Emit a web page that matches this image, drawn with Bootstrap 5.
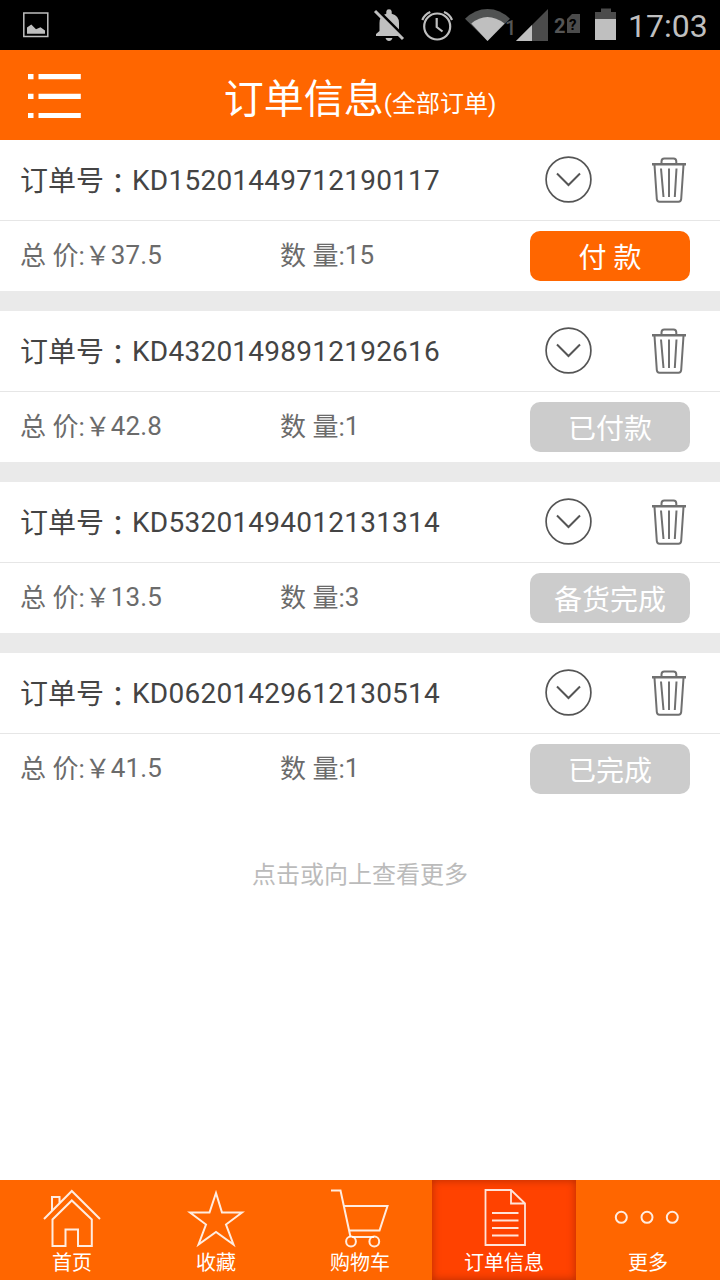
<!DOCTYPE html>
<html lang="zh-CN">
<head>
<meta charset="utf-8">
<meta name="viewport" content="width=device-width, initial-scale=1">
<title>订单信息</title>
<link href="https://cdn.jsdelivr.net/npm/bootstrap@5.3.0/dist/css/bootstrap.min.css" rel="stylesheet">
<style>
  body { font-family: Roboto, "Noto Sans CJK SC", sans-serif; color: #444; height: 1280px; overflow: hidden; }
  svg { display: block; flex: none; }
  .status { height: 50px; background: #000; color: #bfbfbf; }
  .clock { font-size: 32px; line-height: 50px; width: 92px; padding-top: 1px; white-space: nowrap; }
  .topbar { height: 90px; background: #f60; color: #fff; display: grid; grid-template-columns: 110px 1fr 110px; }
  .topbar h1 { font-size: 40px; line-height: 90px; font-weight: 400; padding-top: 5px; }
  .topbar h1 span { font-size: 24px; vertical-align: 1px; }
  .orders .list-group-item { border: 0; border-bottom: 20px solid #eaeaea; padding: 0; }
  .orders .list-group-item:last-child { border-bottom: 0; }
  .order-head { height: 81px; border-bottom: 1px solid #e6e6e6; font-size: 28px; color: #444; padding: 0 31px 0 20px; }
  .order-head > span { padding-top: 2px; }
  .order-body { height: 70px; font-size: 26px; color: #6b6b6b; padding: 0 30px 0 20px; }
  .toggle-icon { margin-right: 55px; }
  .colon { font-family: "Noto Sans CJK TC", sans-serif; vertical-align: -3px; line-height: 1; }
  .num { letter-spacing: .24px; vertical-align: 1px; }
  .order-body .num { letter-spacing: .1px; }
  .price { width: 260px; }
  .pay { width: 160px; height: 50px; border-radius: 10px; border: 0; font-size: 28px; line-height: 50px; padding: 3px 0 0; color: #fff; background: #ccc; }
  .pay.due { background: #f60; }
  .more-tip { color: #bbb; font-size: 24px; line-height: 36px; margin-top: 53px; }
  .tabs { height: 100px; background: #f60; }
  .tabs a { color: #fff; font-size: 20px; line-height: 26px; text-decoration: none; }
  .tabs a.current { background: #ff4200; box-shadow: inset 0 0 8px rgba(130,30,0,.6); }
</style>
</head>
<body class="d-flex flex-column bg-white">
<svg width="0" height="0" class="position-absolute" aria-hidden="true">
  <symbol id="down" viewBox="0 0 50 50">
    <g fill="none" stroke="#555" stroke-width="1.7"><circle cx="24.500" cy="24.500" r="22.400"/><path d="M13 18.500 24.500 30 36 18.500" stroke-width="2"/></g>
  </symbol>
  <symbol id="trash" viewBox="0 0 40 50">
    <g fill="none" stroke="#707070" stroke-width="2">
      <path d="M12.500 9V6.500Q12.500 3.500 15.300 3.500H24.500Q27.300 3.500 27.300 6.500V9"/>
      <path d="M3 9.300H37" stroke-width="2.400"/>
      <path d="M5.500 10 7.800 44Q8 46.700 10.500 46.700H29.500Q32 46.700 32.200 44L34.500 10"/>
      <path d="M12 13.500 14.500 42M20 13.500V42M27.500 13.500 25.800 42"/>
    </g>
  </symbol>
</svg>

<header>
  <div class="status d-flex justify-content-between">
    <svg width="60" height="50" viewBox="0 0 60 50"><rect x="23.800" y="13" width="24" height="23.500" fill="none" stroke="#bfbfbf" stroke-width="1.500"/><path d="M27 33.700V27.500L31.300 24.500 36 29.300 40.500 27.300 45 30.500V33.700Z" fill="#bfbfbf"/></svg>
    <div class="d-flex">
      <svg width="45" height="50" viewBox="370 0 45 50"><path d="M376 36V34L379.500 31V23Q379.500 15.500 386.300 13.700V11.500Q386.500 9.300 389 9.300T391.700 11.500V13.700Q399 15.500 399 23V31L401.500 34V36Z" fill="#bfbfbf"/><path d="M385.500 38H392.500Q391.500 41 389 41T385.500 38Z" fill="#bfbfbf"/><path d="M376.500 9 405 37.500" stroke="#000" stroke-width="3"/><path d="M375 11 403 39" stroke="#bfbfbf" stroke-width="3"/></svg>
      <svg width="50" height="50" viewBox="415 0 50 50"><g fill="none" stroke="#bfbfbf" stroke-width="2.200"><circle cx="437.200" cy="26.500" r="13"/><path d="M436.700 18V27L442.500 31.500"/><path d="M422.300 20Q424.500 14.500 430.300 12M452 20Q450 14.500 444 12"/></g></svg>
      <svg width="85" height="50" viewBox="465 0 85 50"><path d="M465 18.800Q475 9 487.500 9T510 18.800L487.500 41Z" fill="#505252"/><path d="M471.300 23.500Q479 17 487.500 17T504.500 23.500L487.500 41Z" fill="#bfbfbf"/><path d="M548 9V41H516Z" fill="#4b4b4b"/><path d="M532 25V41H516Z" fill="#bfbfbf"/><text x="505" y="35" font-size="20" font-weight="500" fill="#555">1</text></svg>
      <svg width="78" height="50" viewBox="550 0 78 50"><text x="554" y="33" font-size="20" font-weight="700" fill="#555">2</text><path d="M572 14H580V33H567V19Z" fill="#4b4b4b"/><text x="569" y="29.500" font-size="15" font-weight="700" fill="#000">?</text><path d="M595 19V12H601V8.500H611V12H616V19Z" fill="#4b4b4b"/><path d="M595 19H616V40H595Z" fill="#bfbfbf"/></svg>
      <div class="clock">17:03</div>
    </div>
  </div>
  <div class="topbar">
    <svg width="110" height="90" viewBox="0 50 110 90"><path d="M28 76.700H33.500M38.500 76.700H80.800M28 96.300H33.500M38.500 96.300H80.800M28 115.500H33.500M38.500 115.500H80.800" stroke="#fff" stroke-width="5.200"/></svg>
    <h1 class="m-0 text-center text-nowrap">订单信息<span>(全部订单)</span></h1>
  </div>
</header>

<main class="flex-grow-1">
  <ul class="orders list-group list-group-flush rounded-0">
    <li class="list-group-item">
      <div class="order-head d-flex align-items-center"><span class="flex-grow-1">订单号<span class="colon" lang="zh-TW">：</span><span class="num">KD15201449712190117</span></span><svg width="50" height="50" class="toggle-icon"><use href="#down"/></svg><svg width="40" height="50"><use href="#trash"/></svg></div>
      <div class="order-body d-flex align-items-center"><span class="price">总 价:￥<span class="num">37.5</span></span><span class="flex-grow-1">数 量:<span class="num">15</span></span><button class="pay due btn">付 款</button></div>
    </li>
    <li class="list-group-item">
      <div class="order-head d-flex align-items-center"><span class="flex-grow-1">订单号<span class="colon" lang="zh-TW">：</span><span class="num">KD43201498912192616</span></span><svg width="50" height="50" class="toggle-icon"><use href="#down"/></svg><svg width="40" height="50"><use href="#trash"/></svg></div>
      <div class="order-body d-flex align-items-center"><span class="price">总 价:￥<span class="num">42.8</span></span><span class="flex-grow-1">数 量:<span class="num">1</span></span><button class="pay btn">已付款</button></div>
    </li>
    <li class="list-group-item">
      <div class="order-head d-flex align-items-center"><span class="flex-grow-1">订单号<span class="colon" lang="zh-TW">：</span><span class="num">KD53201494012131314</span></span><svg width="50" height="50" class="toggle-icon"><use href="#down"/></svg><svg width="40" height="50"><use href="#trash"/></svg></div>
      <div class="order-body d-flex align-items-center"><span class="price">总 价:￥<span class="num">13.5</span></span><span class="flex-grow-1">数 量:<span class="num">3</span></span><button class="pay btn">备货完成</button></div>
    </li>
    <li class="list-group-item">
      <div class="order-head d-flex align-items-center"><span class="flex-grow-1">订单号<span class="colon" lang="zh-TW">：</span><span class="num">KD06201429612130514</span></span><svg width="50" height="50" class="toggle-icon"><use href="#down"/></svg><svg width="40" height="50"><use href="#trash"/></svg></div>
      <div class="order-body d-flex align-items-center"><span class="price">总 价:￥<span class="num">41.5</span></span><span class="flex-grow-1">数 量:<span class="num">1</span></span><button class="pay btn">已完成</button></div>
    </li>
  </ul>
  <p class="more-tip text-center mb-0">点击或向上查看更多</p>
</main>

<nav class="tabs row g-0 text-center">
  <a href="#" class="col"><svg width="144" height="70" viewBox="0 1180 144 70"><path d="M44 1219 71.800 1191 100 1219M52 1211V1197H59.500V1203M52.500 1219.500V1246H65.500V1229.500H78V1246H91.800V1219.500L71.800 1200.500Z" fill="none" stroke="#fff" stroke-opacity=".88" stroke-width="2"/></svg>首页</a>
  <a href="#" class="col"><svg width="144" height="70" viewBox="144 1180 144 70"><path d="M216 1193 222 1212.500H242L226 1224.500 233.500 1244.500 216 1232 198.500 1244.500 206 1224.500 190 1212.500H209.500Z" fill="none" stroke="#fff" stroke-opacity=".88" stroke-width="2"/></svg>收藏</a>
  <a href="#" class="col"><svg width="144" height="70" viewBox="288 1180 144 70"><g fill="none" stroke="#fff" stroke-opacity=".88" stroke-width="2"><path d="M331 1190.500H340.500L350.500 1237M344 1206H387.500L379.500 1230.500H349.500M352 1237H374"/><circle cx="351" cy="1241.500" r="4.900"/><circle cx="374.300" cy="1241.500" r="4.900"/></g></svg>购物车</a>
  <a href="#" class="col current"><svg width="144" height="70" viewBox="432 1180 144 70"><path d="M485.500 1190H511L525 1203.500V1245H485.500ZM511 1190V1203.500H525M492 1213H518.500M492 1220.500H518.500M492 1228H518.500M492 1235.500H518.500" fill="none" stroke="#fff" stroke-opacity=".85" stroke-width="1.800"/></svg>订单信息</a>
  <a href="#" class="col"><svg width="144" height="70" viewBox="576 1180 144 70"><g fill="none" stroke="#fff" stroke-opacity=".88" stroke-width="2"><circle cx="621.300" cy="1217.300" r="5.500"/><circle cx="647" cy="1217.300" r="5.500"/><circle cx="672.300" cy="1217.300" r="5.500"/></g></svg>更多</a>
</nav>
<script src="https://cdn.jsdelivr.net/npm/bootstrap@5.3.0/dist/js/bootstrap.bundle.min.js"></script>
</body>
</html>
